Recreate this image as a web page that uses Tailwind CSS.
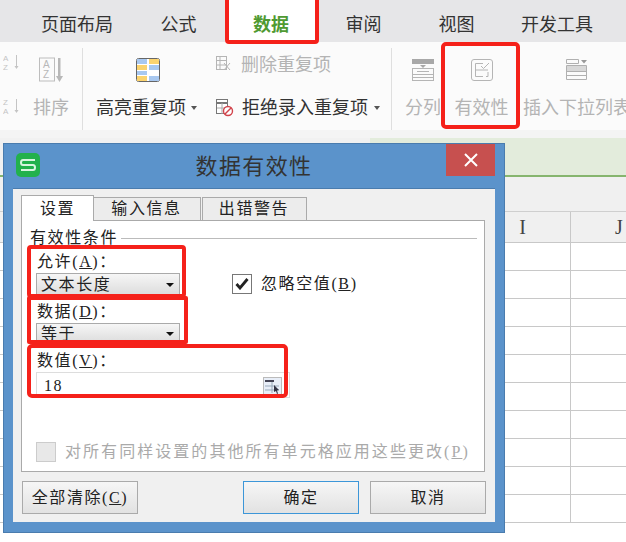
<!DOCTYPE html>
<html lang="zh-CN">
<head>
  <meta charset="UTF-8" />
  <title>数据有效性</title>
  <script src="https://cdn.jsdelivr.net/npm/@tailwindcss/browser@4"></script>
</head>
<body class="w-[626px] h-[542px] overflow-hidden relative bg-white text-[#333] font-['Liberation_Sans','Noto_Sans_CJK_SC',sans-serif]">

  <!-- menu tabs -->
  <div class="h-[42px] bg-[#e6e6e8] flex pl-[22px] text-[18px] items-stretch">
    <div class="w-[110px] flex items-center justify-center pt-[8px]">页面布局</div>
    <div class="w-[93px] flex items-center justify-center pt-[8px]">公式</div>
    <div class="w-[92px] flex items-center justify-center pt-[8px] bg-white text-[#4f9a32] font-bold">数据</div>
    <div class="w-[93px] flex items-center justify-center pt-[8px]">审阅</div>
    <div class="w-[93px] flex items-center justify-center pt-[8px]">视图</div>
    <div class="w-[108px] flex items-center justify-center pt-[8px]">开发工具</div>
  </div>

  <!-- ribbon -->
  <div class="h-[88px] bg-[#fbfbfb] flex text-[18px] overflow-hidden">
    <div class="w-[33px] pl-[3px] pt-[12px] flex flex-col gap-[26px] text-[#c4c4c4] shrink-0">
      <svg width="16" height="18" viewBox="0 0 16 18" fill="currentColor" font-size="8" font-family="Liberation Sans"><text x="0" y="7">A</text><text x="0" y="16">Z</text><path d="M13.500 1v13" stroke="currentColor" fill="none"/><path d="M11.500 12l2 3 2-3z"/></svg>
      <svg width="16" height="18" viewBox="0 0 16 18" fill="currentColor" font-size="8" font-family="Liberation Sans"><text x="0" y="7">Z</text><text x="0" y="16">A</text><path d="M13.500 1v13" stroke="currentColor" fill="none"/><path d="M11.500 12l2 3 2-3z"/></svg>
    </div>
    <div class="w-[49px] shrink-0">
      <div class="h-[50px] pl-[6px] pt-[15px]">
        <svg width="26" height="26" viewBox="0 0 26 26" fill="#b8b8b8" font-size="10" font-family="Liberation Sans"><rect x="0.500" y="1" width="15" height="23" fill="none" stroke="#bdbdbd"/><text x="4" y="11">A</text><text x="4" y="21">Z</text><path d="M19 1h2.500v19H19z"/><path d="M17 19h7l-3.500 6z"/></svg>
      </div>
      <div class="text-[#b4b4b4] h-[32px] leading-[32px]">排序</div>
    </div>
    <div class="w-px h-[82px] mt-[6px] bg-[#dfdfdf] shrink-0"></div>
    <div class="w-[122px] shrink-0 pl-[13px]">
      <div class="h-[50px] pl-[40px] pt-[16px]">
        <svg width="24" height="24" viewBox="0 0 24 24"><rect x="0.500" y="0.500" width="23" height="23" rx="2" fill="#fff" stroke="#666"/><path d="M1 1h10v5H1z" fill="#a8c8f0"/><path d="M13 1h10v5H13z" fill="#fbd36e"/><path d="M1 7h10v5H1z" fill="#fbd36e"/><path d="M13 7h10v5H13z" fill="#a8c8f0"/><path d="M1 13h10v4H1z" fill="#a8c8f0"/><path d="M1 18h10v5H1z" fill="#fbd36e"/><path d="M13 18h10v5H13z" fill="#a8c8f0"/></svg>
      </div>
      <div class="flex items-center gap-[5px] h-[32px] whitespace-nowrap">高亮重复项<span class="border-x-[3.5px] border-t-[4px] border-x-transparent border-t-[#555]"></span></div>
    </div>
    <div class="w-[186px] shrink-0 pl-[11px]">
      <div class="h-[50px] flex gap-[10px] pt-[10px] text-[#b4b4b4] whitespace-nowrap leading-[26px]">
        <svg class="mt-[4px]" width="15" height="15" viewBox="0 0 15 15" fill="none" stroke="#b5b5b5"><rect x="0.500" y="0.500" width="10" height="13"/><path d="M1 4.500h9M1 9h9M4 1v12M8 7l6 7M14 7l-6 7"/></svg>
        <span>删除重复项</span>
      </div>
      <div class="h-[32px] flex items-center gap-[8px] whitespace-nowrap">
        <svg width="18" height="18" viewBox="0 0 18 18" fill="none"><rect x="0.500" y="0.500" width="11" height="14" fill="#fff" stroke="#777"/><path d="M1 4h10" stroke="#777" stroke-width="2"/><path d="M1 9h10M6 4v11" stroke="#aaa"/><circle cx="12" cy="12" r="4.500" fill="#fff" stroke="#d1424a" stroke-width="1.400"/><path d="M9 15l6-6" stroke="#d1424a" stroke-width="1.400"/></svg>
        <span class="flex items-center gap-[6px]">拒绝录入重复项<span class="border-x-[3.5px] border-t-[4px] border-x-transparent border-t-[#555]"></span></span>
      </div>
    </div>
    <div class="w-px h-[82px] mt-[6px] bg-[#dfdfdf] shrink-0"></div>
    <div class="w-[50px] shrink-0 pl-[13px]">
      <div class="h-[50px] pl-[7px] pt-[17px]">
        <svg width="22" height="22" viewBox="0 0 22 22" fill="none" stroke="#b5b5b5"><path d="M0 0h22v5H0z" fill="#a8a8a8" stroke="none"/><path d="M8 6h6l-3 3z" fill="#a8a8a8" stroke="none"/><rect x="0.500" y="9.500" width="21" height="12"/><path d="M5 12.500h12M1 15.500h20M1 18.500h20"/></svg>
      </div>
      <div class="text-[#b4b4b4] h-[32px] leading-[32px] whitespace-nowrap">分列</div>
    </div>
    <div class="w-[78px] shrink-0 text-center pl-[1px]">
      <div class="h-[50px] pt-[17px] flex justify-center">
        <svg width="22" height="22" viewBox="0 0 22 22" fill="none" stroke="#b5b5b5"><rect x="0.500" y="0.500" width="21" height="21" rx="2.500"/><path d="M12 4.500H4.500v13H12M4.500 11H17M17 13v4.500h-2M10 7l2.500 2.500L18 4"/></svg>
      </div>
      <div class="text-[#b4b4b4] h-[32px] leading-[32px]">有效性</div>
    </div>
    <div class="shrink-0 pl-[3px]">
      <div class="h-[50px] pl-[43px] pt-[17px]">
        <svg width="22" height="22" viewBox="0 0 22 22" fill="none" stroke="#b0b0b0"><path d="M0.500 0.500h12v4h-12zM0.500 6.500h20v14h-20z"/><path d="M1 7h19v5H1z" fill="#d8d8d8" stroke="none"/><path d="M1 12.500h19M1 16.500h19"/><path d="M15 1h6l-3 3.500z" fill="#999" stroke="none"/></svg>
      </div>
      <div class="text-[#b4b4b4] h-[32px] leading-[32px] whitespace-nowrap">插入下拉列表</div>
    </div>
  </div>

  <!-- formula bar strip -->
  <div class="h-[8px] bg-[#f4f4f4]"></div>
  <div class="h-[39px] flex border-b-2 border-[#86b56e]"><div class="w-[370px] bg-[#f1f1f1]"></div><div class="flex-1 bg-[#e3ecdc]"></div></div>
  <div class="h-[35px] bg-[#f0f0f0] border-b border-[#cfcfcf]"></div>

  <!-- sheet -->
  <div class="ml-[-5px] flex h-[30px] bg-[#f0f0f0] text-[20px] text-[#444] font-['Liberation_Serif','Noto_Sans_CJK_SC',serif]">
    <div class="w-[96px] shrink-0 border-r border-[#c8c8c8]"></div>
    <div class="w-[96px] shrink-0 border-r border-[#c8c8c8]"></div>
    <div class="w-[96px] shrink-0 border-r border-[#c8c8c8]"></div>
    <div class="w-[96px] shrink-0 border-r border-[#c8c8c8]"></div>
    <div class="w-[96px] shrink-0 border-r border-[#c8c8c8]"></div>
    <div class="w-[96px] shrink-0 border-r border-[#c8c8c8] flex items-center justify-center">I</div>
    <div class="w-[96px] shrink-0 flex items-center justify-center">J</div>
  </div>
  <div id="sheet" class="ml-[-5px] w-[672px] grid grid-cols-[repeat(7,96px)] auto-rows-[28px] border-t border-[#c8c8c8]"></div>

  <!-- dialog -->
  <div class="absolute left-[3px] top-[143px] w-[502px] h-[390px] bg-[#5b93cb] border border-[#4a7cae] flex flex-col">
    <div class="h-[44px] shrink-0 relative flex items-center justify-center text-[22px] text-[#333] tracking-[1.4px] font-normal">
      <div class="absolute left-[12px] top-[9px] w-[24px] h-[24px] rounded-[5px] bg-[#22b14c] flex items-center justify-center">
        <svg width="16" height="12" viewBox="0 0 16 12" fill="none" stroke="#d8f5df" stroke-width="2"><path d="M15 1H3Q1 1 1 3.500T3 6h10q2 0 2 2.500T13 11H1"/></svg>
      </div>
      数据有效性
      <div class="absolute right-[9px] top-0 w-[49px] h-[32px] bg-[#c7504f] flex items-center justify-center">
        <svg width="14" height="14" viewBox="0 0 14 14" stroke="#fff" stroke-width="2"><path d="M1 1l12 12M13 1L1 13"/></svg>
      </div>
    </div>
    <div class="mx-[9px] h-[334px] bg-[#f0f0f0] border-t border-[#4a7cae] px-[8px] pt-[7px] text-[16px] tracking-[1.6px] text-[#222] font-['Liberation_Serif','Noto_Sans_CJK_SC',serif]">
      <div class="flex h-[25px] items-end relative z-10">
        <div class="w-[73px] h-[26px] bg-white border border-b-0 border-[#aaa] flex items-center justify-center">设置</div>
        <div class="w-[107px] h-[24px] bg-[#ececec] border border-[#aaa] border-l-0 flex items-center justify-center pr-[1px]">输入信息</div>
        <div class="ml-[1px] w-[105px] h-[24px] bg-[#ececec] border border-[#aaa] flex items-center justify-center pr-[1px]">出错警告</div>
      </div>
      <div class="w-[464px] h-[252px] bg-white border border-[#aaa] -mt-px relative pl-[14px]">
        <div class="absolute left-[8px] top-[5px] flex items-center w-[447px] gap-[3px]">
          <span class="whitespace-nowrap">有效性条件</span><span class="flex-1 h-px bg-[#bbb]"></span>
        </div>
        <div class="pt-[29px] flex">
          <div class="w-[196px]">
            <div class="h-[23px] leading-[23px] pl-[1px]">允许(<u>A</u>)：</div>
            <div class="w-[144px] h-[23px] border border-[#aaa] bg-gradient-to-b from-[#f6f6f6] to-[#dcdcdc] flex items-center justify-between pl-[4px] pr-[5px]">文本长度<span class="border-x-[4px] border-t-[4px] border-x-transparent border-t-[#111]"></span></div>
          </div>
          <div class="pt-[24px] flex items-center gap-[9px] h-[44px]">
            <span class="w-[20px] h-[20px] border border-[#777] bg-white flex items-center justify-center">
              <svg width="14" height="12" viewBox="0 0 14 12" fill="none" stroke="#222" stroke-width="2.800"><path d="M1.500 6l3.500 4 7.500-9"/></svg>
            </span>
            <span class="whitespace-nowrap">忽略空值(<u>B</u>)</span>
          </div>
        </div>
        <div class="mt-[4px] h-[23px] leading-[23px] pl-[1px]">数据(<u>D</u>)：</div>
        <div class="w-[144px] h-[21px] border border-[#aaa] bg-gradient-to-b from-[#f6f6f6] to-[#dcdcdc] flex items-center justify-between pl-[4px] pr-[5px]">等于<span class="border-x-[4px] border-t-[4px] border-x-transparent border-t-[#111]"></span></div>
        <div class="mt-[5px] h-[23px] leading-[23px] pl-[1px]">数值(<u>V</u>)：</div>
        <div class="w-[254px] h-[26px] border border-[#ddd] bg-white flex items-center justify-between pl-[7px] pr-[7px] pt-[2px]">18
          <span class="w-[19px] h-[19px] bg-[#e8eef8] border border-[#bbb] flex items-start">
            <svg width="17" height="17" viewBox="0 0 17 17" fill="none"><path d="M1 3h9" stroke="#445" stroke-width="2"/><path d="M1 8h14M1 12h14M8 4v11" stroke="#9ab"/><path d="M10 7l5 5-2 .5 1 3-1 .5-1-3-2 1z" fill="#334"/></svg>
          </span>
        </div>
        <div class="mt-[42px] flex items-center gap-[9px] text-[#aaa] whitespace-nowrap tracking-[2.05px]">
          <span class="w-[20px] h-[20px] border border-[#ccc] bg-[#e8e8e8] shrink-0"></span>
          <span>对所有同样设置的其他所有单元格应用这些更改(<u>P</u>)</span>
        </div>
      </div>
      <div class="flex mt-[9px] pl-[1px]">
        <button class="w-[116px] h-[33px] border border-[#aaa] bg-gradient-to-b from-[#f6f6f6] to-[#e2e2e2]">全部清除(<u>C</u>)</button>
        <button class="ml-[105px] w-[116px] h-[33px] border border-[#3c96d8] bg-gradient-to-b from-[#f6f6f6] to-[#e2e2e2]">确定</button>
        <button class="ml-[11px] w-[116px] h-[33px] border border-[#aaa] bg-gradient-to-b from-[#f6f6f6] to-[#e2e2e2]">取消</button>
      </div>
    </div>
  </div>

  <!-- red annotation boxes -->
  <div class="absolute left-[225px] top-[-6px] w-[94px] h-[50px] border-[4px] border-[#f5211a] rounded-[4px]"></div>
  <div class="absolute left-[441px] top-[42px] w-[79px] h-[87px] border-[4px] border-[#f5211a] rounded-[5px]"></div>
  <div class="absolute left-[27px] top-[245px] w-[159px] h-[53px] border-[4px] border-[#f5211a] rounded-[4px]"></div>
  <div class="absolute left-[27px] top-[296px] w-[161px] h-[48px] border-[4px] border-[#f5211a] rounded-[2px]"></div>
  <div class="absolute left-[27px] top-[344px] w-[261px] h-[54px] border-[4px] border-[#f5211a] rounded-[5px]"></div>

  <script>
    // empty cells for the visible part of the sheet
    var sheet = document.getElementById('sheet');
    for (var i = 0; i < 70; i++) {
      var cell = document.createElement('div');
      cell.className = 'border-r border-b border-[#c8c8c8]';
      sheet.appendChild(cell);
    }
  </script>
</body>
</html>
